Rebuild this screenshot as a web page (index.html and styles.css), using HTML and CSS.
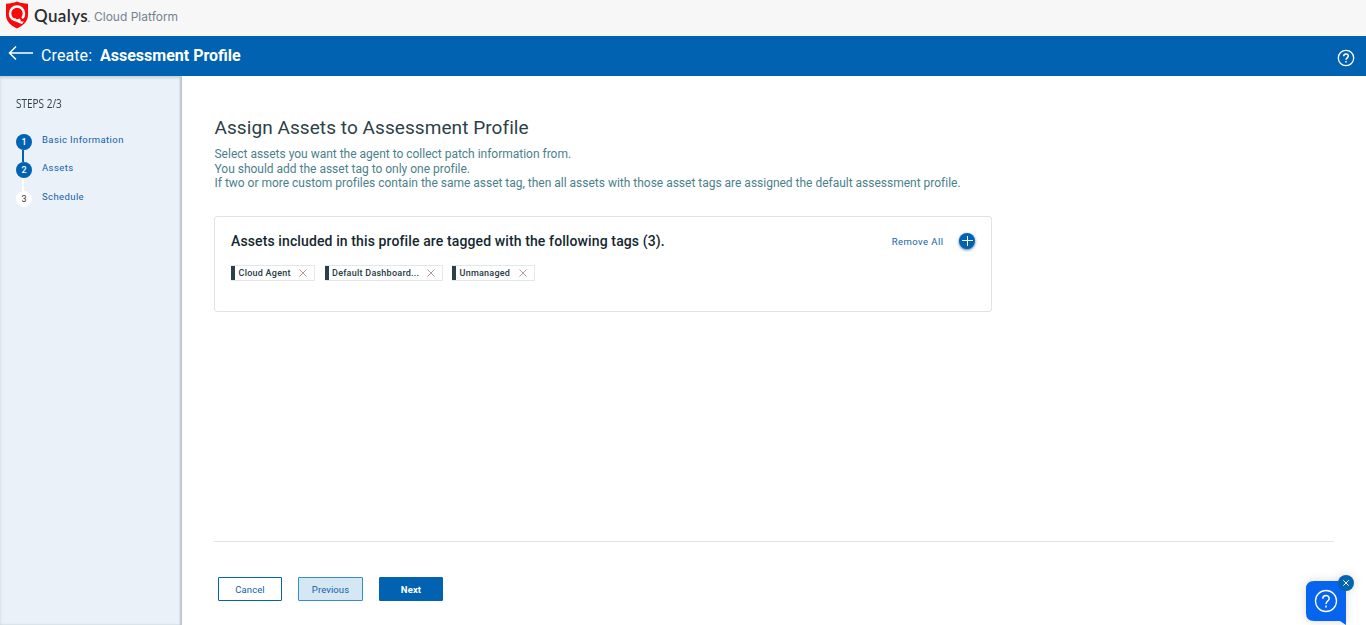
FILE: index.html
```html
<!DOCTYPE html>
<html lang="en">
<head>
<meta charset="utf-8">
<title>Create: Assessment Profile</title>
<link rel="stylesheet" href="styles.css">
</head>
<body>
<header class="brand">
  <svg class="shield" width="24" height="28" viewBox="0 0 24 28"><path d="M12 0.5C9 1.800 5 2.600 1 2.800V14C1 20 5.500 24.500 12 27.500C18.500 24.500 23 20 23 14V2.800C19 2.600 15 1.800 12 .5Z" fill="#f8090b"/><circle cx="12" cy="12.500" r="7" fill="none" stroke="#fff" stroke-width="2.600"/><path d="M10 17C12 19.500 15.500 21 19 20.500L17 23C14 22.500 11 20.500 9 18Z" fill="#fff"/><path d="M14.500 15L16.500 18.500L20 18.800" fill="none" stroke="#f8090b" stroke-width="2"/></svg>
  <span class="name">Qualys</span><span class="dot">.</span><span class="platform">Cloud Platform</span>
</header>
<div class="titlebar">
  <svg class="back" width="26" height="16" viewBox="0 0 26 16"><path d="M8 1.500L1.500 8L8 14.500M1.500 8H25" fill="none" stroke="#fff" stroke-width="1.500"/></svg>
  <span class="create">Create:</span><span class="title">Assessment Profile</span>
  <svg class="help" width="18" height="18" viewBox="0 0 18 18" fill="none" stroke="#fff"><circle cx="9" cy="9" r="7.700" stroke-width="1.300"/><path d="M6.700 7.200C6.700 4.200 11.300 4.200 11.300 7C11.300 8.800 9 8.800 9 10.700M9 12V13.500" stroke-width="1.500"/></svg>
</div>
<div class="layout">
  <aside class="sidebar">
    <div class="steps-title"><span class="condensed">STEPS 2/3</span></div>
    <ol class="steps">
      <li class="step done"><span class="bullet">1</span><span class="label">Basic Information</span></li>
      <li class="step current"><span class="bullet">2</span><span class="label">Assets</span></li>
      <li class="step"><span class="bullet">3</span><span class="label">Schedule</span></li>
    </ol>
  </aside>
  <main class="main">
    <div class="content">
      <h1 class="heading">Assign Assets to Assessment Profile</h1>
      <p class="intro">Select assets you want the agent to collect patch information from.<br>You should add the asset tag to only one profile.<br>If two or more custom profiles contain the same asset tag, then all assets with those asset tags are assigned the default assessment profile.</p>
      <section class="card">
        <div class="card-head">
          <h2 class="card-title">Assets included in this profile are tagged with the following tags (3).</h2>
          <span class="remove">Remove All</span>
          <span class="add"><svg width="16" height="16" viewBox="0 0 16 16"><path d="M8.500 3V13M3 7.500H14" stroke="#fff"/></svg></span>
        </div>
        <div class="tags">
          <span class="tag agent"><span class="tag-text">Cloud Agent</span><svg class="x" width="8" height="8" viewBox="0 0 8 8"><path d="M.5.5L7.500 7.500M7.500.5L.5 7.500"/></svg></span>
          <span class="tag dashboard"><span class="tag-text">Default Dashboard...</span><svg class="x" width="8" height="8" viewBox="0 0 8 8"><path d="M.5.5L7.500 7.500M7.500.5L.5 7.500"/></svg></span>
          <span class="tag unmanaged"><span class="tag-text">Unmanaged</span><svg class="x" width="8" height="8" viewBox="0 0 8 8"><path d="M.5.5L7.500 7.500M7.500.5L.5 7.500"/></svg></span>
        </div>
      </section>
    </div>
    <footer class="actions">
      <button class="btn cancel">Cancel</button>
      <button class="btn previous">Previous</button>
      <button class="btn next">Next</button>
    </footer>
  </main>
</div>
<div class="chat">
  <svg width="76" height="64" viewBox="0 0 76 64" fill="none"><path d="M24 20H48Q56 20 56 28V64L50 60H24Q16 60 16 52V28Q16 20 24 20Z" fill="#0664ee"/><circle cx="36" cy="40" r="10.500" stroke="#fff" stroke-width="1.300"/><path d="M32.800 37.800C32.800 33.500 39.200 33.500 39.200 37.500C39.200 40 36 40 36 43M36 44.500V46.500" stroke="#fff" stroke-width="1.500"/><circle cx="56" cy="22" r="8" fill="#0564b0"/><path d="M53.300 19.300L58.700 24.700M58.700 19.300L53.300 24.700" stroke="#fff"/></svg>
</div>
</body>
</html>
```
FILE: styles.css
```css
* { box-sizing: border-box; }
body { margin: 0; height: 625px; overflow: hidden; display: flex; flex-direction: column; font-family: Roboto, "Liberation Sans", sans-serif; background: #fff; }
.brand { height: 36px; flex: none; display: flex; background: #f7f7f7; padding-left: 5px; line-height: 32px; }
.shield { margin-top: 1px; }
.name { margin-left: 5px; width: 53px; font: 600 17px/31px Lato, sans-serif; letter-spacing: .35px; color: #2c2c2e; }
.dot { width: 7px; font-size: 14px; line-height: 34px; color: #888; }
.platform { font: 400 12px/34px Inter, sans-serif; color: #75828f; }
.titlebar { height: 40px; flex: none; display: flex; background: #0062b1; color: #fff; padding: 0 11px 0 8px; line-height: 40px; font-size: 16px; }
.back { margin-top: 9px; }
.create { margin-left: 7px; width: 59px; letter-spacing: .1px; }
.title { font-weight: 700; }
.help { margin: 13px 0 0 auto; }
.layout { flex: 1; display: flex; min-height: 0; }
.sidebar { width: 182px; flex: none; padding: 18px 16px; background: #eaf1f9; box-shadow: inset 0 2px 3px #c7d0d8, inset -2px 0 2px #b6bfc8; }
.steps-title { height: 20px; font: 400 13px/19px "Open Sans", sans-serif; color: #2e4049; }
.condensed { display: inline-block; transform: scaleX(.77); transform-origin: left; }
.steps { list-style: none; margin: 20px 0 0; padding: 0; }
.step { display: grid; grid-template-columns: 16px 1fr; column-gap: 10px; height: 28px; }
.step.current { height: 29px; }
.bullet { height: 16px; border-radius: 50%; background: #fff; color: #333; font-size: 9px; line-height: 17px; text-align: center; }
.done .bullet, .current .bullet { background: #0062b1; color: #fff; font-weight: 500; }
.done::after, .current::after { content: ""; width: 2px; margin-left: 6px; background: #0062b1; height: 12px; }
.current::after { background: #fff; height: 13px; }
.label { font-size: 9.500px; line-height: 12px; letter-spacing: .4px; color: #1360a8; white-space: nowrap; }
.main { flex: 1; padding: 0 32px; display: flex; flex-direction: column; }
.content { flex: 1; }
.heading { margin: 40px 0 0 .5px; font-size: 19px; font-weight: 400; line-height: 24px; letter-spacing: .07px; color: #2d3f47; white-space: nowrap; }
.intro { margin: 7px 0 0 .5px; font-size: 12px; line-height: 14.500px; letter-spacing: -.01px; color: #4c7f8b; white-space: nowrap; }
.card { width: 778px; height: 96px; margin-top: 25px; padding: 16px; border: 1px solid #dde4e6; border-radius: 3px; }
.card-head { display: flex; height: 16px; align-items: center; }
.card-title { margin: 0; flex: 1; font-size: 14px; line-height: 16px; letter-spacing: .115px; font-weight: 500; color: #14272f; white-space: nowrap; }
.remove { font-size: 9.500px; line-height: 12px; padding-top: 2px; letter-spacing: .45px; color: #1360a8; margin-right: 15.500px; }
.add { width: 16px; height: 16px; border-radius: 50%; background: #0062b1; box-shadow: 0 1px 3px #4d7695; }
.add svg { display: block; }
.tags { display: flex; margin-top: 16px; }
.tag { height: 16px; display: flex; align-items: center; justify-content: space-between; background: linear-gradient(90deg, #2b4149 4px, transparent 4px) border-box; border: solid #e2e7e9; border-width: 1px 1px 1px 0; padding: 0 7px 0 7.500px; font-size: 9px; letter-spacing: .25px; font-weight: 500; color: #273a42; white-space: nowrap; }
.tag-text { line-height: 14px; }
.x { fill: none; stroke: #a47f7f; stroke-width: .8; }
.agent { width: 84px; margin-right: 10px; }
.dashboard { width: 118px; margin-right: 9px; padding-left: 7px; }
.unmanaged { width: 83px; }
.actions { height: 84px; flex: none; display: flex; border-top: 1px solid #dce4e7; padding: 35px 4px 0; gap: 16px; }
.btn { height: 24px; width: 64px; padding: 1px 0 0; border: 1px solid #0062b1; border-radius: 1px; font: 400 9.500px Roboto, sans-serif; letter-spacing: .1px; color: #1360a8; background: #fff; }
.previous { width: 65px; border-color: #348fc6; background: #d5e7f2; }
.next { background: #0062b1; color: #fff; font-weight: 700; }
.chat { position: absolute; right: 0; bottom: 0; height: 64px; filter: drop-shadow(0 0 4px rgba(0,0,0,.15)); }
```
